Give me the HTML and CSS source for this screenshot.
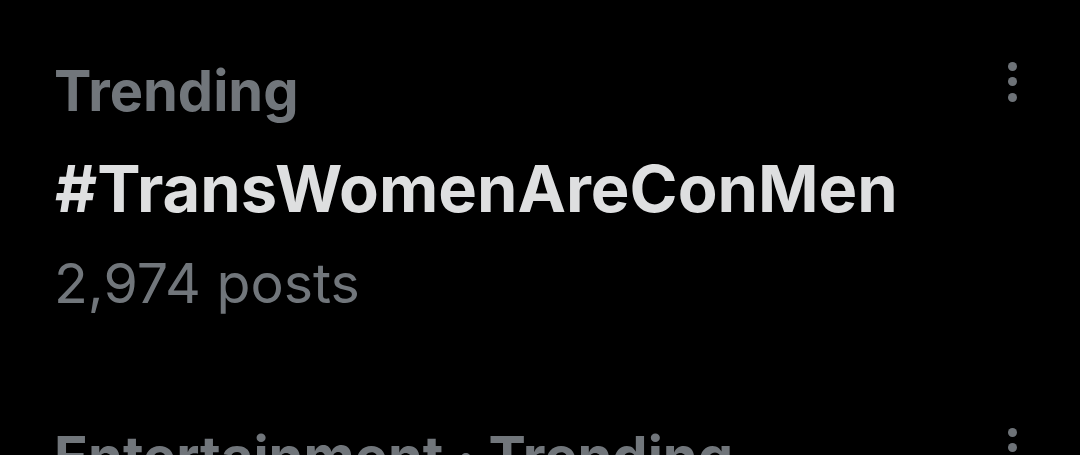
FILE: index.html
```html
<!DOCTYPE html>
<html lang="en">
<head>
    <meta charset="UTF-8">
    <title>Trending</title>
    <link rel="stylesheet" href="styles.css">
</head>
<body>
    <div class="trend">
        <div class="trend-body">
            <div class="trend-context">Trending</div>
            <div class="trend-name">#TransWomenAreConMen</div>
            <div class="trend-count">2,974 posts</div>
        </div>
        <div class="more">
            <span></span><span></span><span></span>
        </div>
    </div>
    <div class="trend">
        <div class="trend-body">
            <div class="trend-context">Entertainment · Trending</div>
        </div>
        <div class="more">
            <span></span><span></span><span></span>
        </div>
    </div>
</body>
</html>
```

FILE: styles.css
```css
body {
    margin: 0;
    background-color: #000;
    font-family: 'Inter', 'Roboto', sans-serif;
    overflow: hidden;
    height: 455px;
}

.trend {
    display: flex;
    justify-content: space-between;
    padding: 57px 63px 0 54px;
}

.trend + .trend {
    padding-top: 109px;
}

.trend-context {
    color: #71767b;
    font-size: 56px;
    font-weight: 700;
    line-height: 68px;
}

.trend-name {
    color: #dedfe0;
    font-size: 65px;
    font-weight: 700;
    line-height: 127px;
    margin-left: 1px;
}

.trend-count {
    color: #71767b;
    font-size: 55.5px;
    font-weight: 400;
    line-height: 62px;
}

.more {
    display: flex;
    flex-direction: column;
    gap: 6.5px;
    padding-top: 4.5px;
}

.more span {
    display: block;
    width: 9px;
    height: 9px;
    border-radius: 50%;
    background-color: #6e7378;
}
```
